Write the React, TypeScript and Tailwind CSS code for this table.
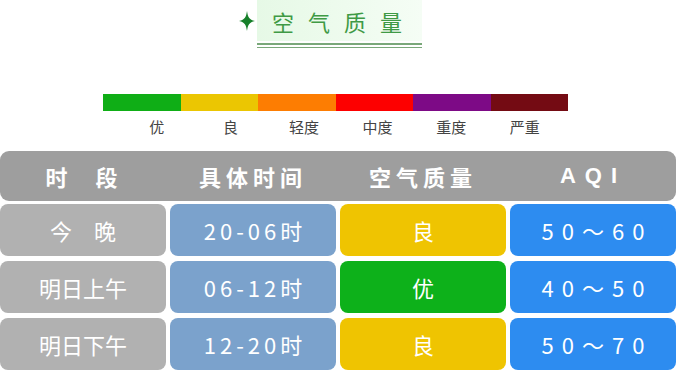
import React from "react";

const levels = [
  { c: "bg-[#0fae16]", l: "优" },
  { c: "bg-[#ebc602]", l: "良" },
  { c: "bg-[#fd7d02]", l: "轻度" },
  { c: "bg-[#fd0000]", l: "中度" },
  { c: "bg-[#7d0a86]", l: "重度" },
  { c: "bg-[#740b13]", l: "严重" },
];

const rows = [
  { p: "今　晚", t: "20-06时", q: "良", qc: "bg-[#efc401]", a: "50～60" },
  { p: "明日上午", t: "06-12时", q: "优", qc: "bg-[#0db11a]", a: "40～50" },
  { p: "明日下午", t: "12-20时", q: "良", qc: "bg-[#efc401]", a: "50～70" },
];

export default function App() {
  const font = { fontFamily: '"Noto Sans CJK SC", "Noto Sans", sans-serif' };
  return (
    <div className="w-[677px] h-[374px] bg-white overflow-hidden relative" style={font}>
      {/* title */}
      <div className="flex items-start h-[50px]">
        <div className="w-[255px] flex justify-end pt-[11px]">
          <svg width="16" height="20" viewBox="0 0 16 20">
            <path d="M8 0 C8.9 6 10 8.6 16 10 C10 11.4 8.9 14 8 20 C7.1 14 6 11.4 0 10 C6 8.6 7.1 6 8 0 Z" fill="#17802a" />
          </svg>
        </div>
        <div className="ml-[2px] w-[165px] flex flex-col">
          <div className="h-[41px] bg-gradient-to-r from-[#e6f9e6] to-[#f5fdf5] flex items-center pl-[15px] text-[22px] text-[#3f9a45] tracking-[14px] leading-none">
            空气质量
          </div>
          <div className="mt-[2px] h-[1.5px] bg-[#7aa87a]" />
          <div className="mt-[2px] h-[1.5px] bg-[#7aa87a]" />
        </div>
      </div>

      {/* color bar */}
      <div className="mt-[44px] ml-[103px] flex w-[465px] h-[17px]">
        {levels.map((x, i) => (
          <div key={i} className={`flex-1 ${x.c}`} />
        ))}
      </div>
      <div className="ml-[120px] flex mt-[6px]">
        {levels.map((x, i) => (
          <div key={i} className="w-[73.6px] text-center text-[15px] leading-[20px] text-[#444]">
            {x.l}
          </div>
        ))}
      </div>

      {/* table */}
      <div className="mt-[14px] w-[676px]">
        <div className="h-[50px] bg-[#9e9e9e] rounded-[9px] grid grid-cols-4 gap-[4px] items-center text-white font-bold text-[22px] leading-none">
          <div className="text-center tracking-[3px]">时　段</div>
          <div className="text-center tracking-[5px]">具体时间</div>
          <div className="text-center tracking-[5px]">空气质量</div>
          <div className="text-center tracking-[9px]" style={{ fontFamily: '"Liberation Sans", sans-serif' }}>AQI</div>
        </div>
        <div className="mt-[3px] flex flex-col gap-[5px]">
          {rows.map((r, i) => (
            <div key={i} className="grid grid-cols-4 gap-[4px] h-[52px] text-white text-[22px] leading-none">
              <div className="bg-[#b1b1b1] rounded-[8px] flex items-center justify-center">{r.p}</div>
              <div className="bg-[#7ba2cc] rounded-[8px] flex items-center justify-center tracking-[4px] pl-[4px]">
                {r.t}
              </div>
              <div className={`${r.qc} rounded-[8px] flex items-center justify-center`}>{r.q}</div>
              <div className="bg-[#2d8cf0] rounded-[8px] flex items-center justify-center tracking-[8px] pl-[8px]">
                {r.a}
              </div>
            </div>
          ))}
        </div>
      </div>
    </div>
  );
}
